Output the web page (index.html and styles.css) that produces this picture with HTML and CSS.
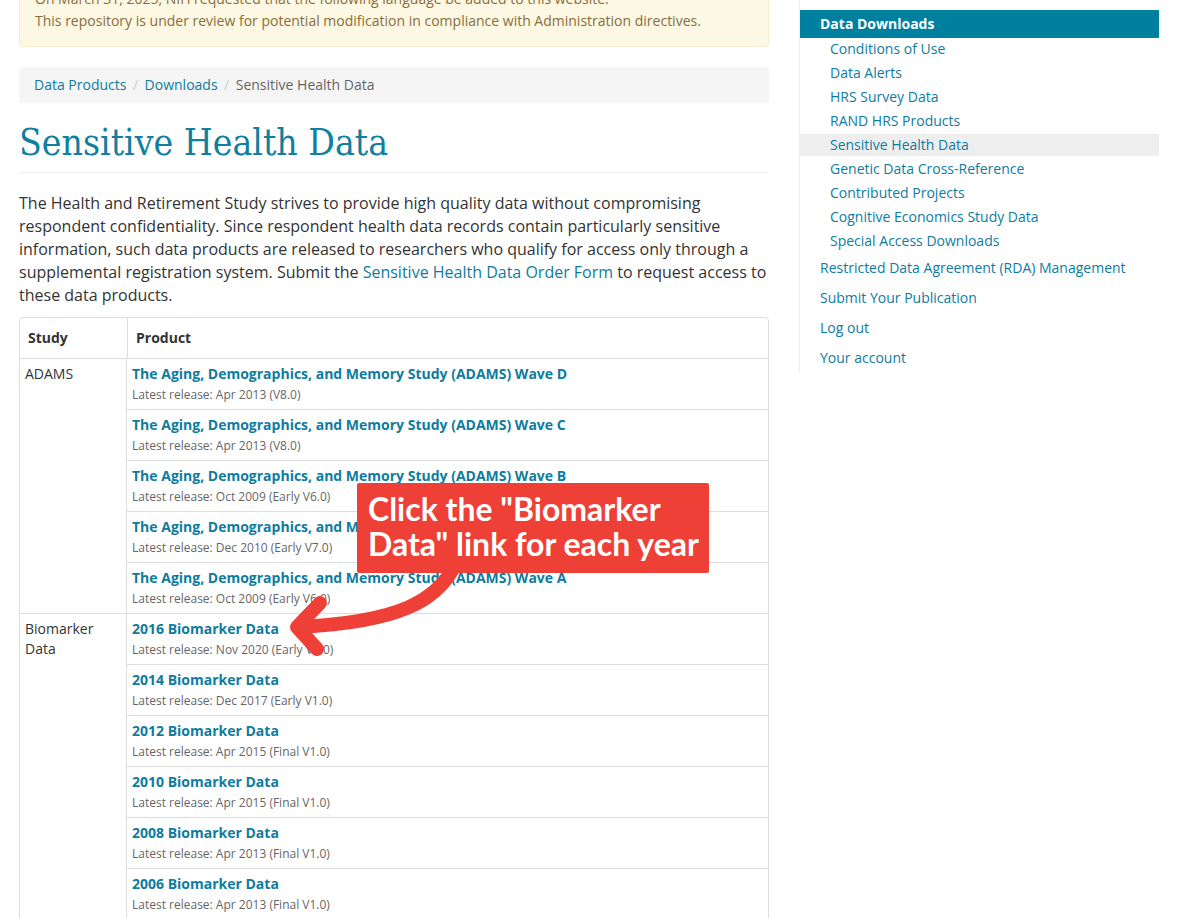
FILE: index.html
```html
<!DOCTYPE html>
<html lang="en">
<head>
<meta charset="utf-8">
<title>Sensitive Health Data</title>
<link rel="stylesheet" href="styles.css">
</head>
<body>
<div class="page">
  <main class="main">
    <div class="alert">
      <p class="alert-line1">On March 31, 2025, NIH requested that the following language be added to this website:</p>
      <p>This repository is under review for potential modification in compliance with Administration directives.</p>
    </div>
    <ol class="breadcrumb">
      <li><a href="#">Data Products</a></li>
      <li class="sep">/</li>
      <li><a href="#">Downloads</a></li>
      <li class="sep">/</li>
      <li class="current">Sensitive Health Data</li>
    </ol>
    <h1 class="title">Sensitive Health Data</h1>
    <p class="intro">The Health and Retirement Study strives to provide high quality data without compromising respondent confidentiality. Since respondent health data records contain particularly sensitive information, such data products are released to researchers who qualify for access only through a supplemental registration system. Submit the <a href="#">Sensitive Health Data Order Form</a> to request access to these data products.</p>
    <div class="table-wrap">
      <div class="callout">Click the "Biomarker<br>Data" link for each year</div>
      <svg class="arrow" width="200" height="110" viewBox="0 0 200 110">
        <path d="M178 6 C160 42 122 63 22 68" fill="none" stroke="#ee4037" stroke-width="14" stroke-linecap="round"/>
        <path d="M43 44 L20 68 L40 90" fill="none" stroke="#ee4037" stroke-width="14" stroke-linecap="round" stroke-linejoin="round"/>
      </svg>
      <table class="products">
        <thead>
          <tr><th class="col-study">Study</th><th>Product</th></tr>
        </thead>
        <tbody>
          <tr><td class="study" rowspan="5">ADAMS</td><td><a href="#" class="prod">The Aging, Demographics, and Memory Study (ADAMS) Wave D</a><div class="rel">Latest release: Apr 2013 (V8.0)</div></td></tr>
          <tr><td><a href="#" class="prod">The Aging, Demographics, and Memory Study (ADAMS) Wave C</a><div class="rel">Latest release: Apr 2013 (V8.0)</div></td></tr>
          <tr><td><a href="#" class="prod">The Aging, Demographics, and Memory Study (ADAMS) Wave B</a><div class="rel">Latest release: Oct 2009 (Early V6.0)</div></td></tr>
          <tr><td><a href="#" class="prod">The Aging, Demographics, and Memory Study (ADAMS) Wave A</a><div class="rel">Latest release: Dec 2010 (Early V7.0)</div></td></tr>
          <tr><td><a href="#" class="prod">The Aging, Demographics, and Memory Study (ADAMS) Wave A</a><div class="rel">Latest release: Oct 2009 (Early V6.0)</div></td></tr>
          <tr><td class="study" rowspan="7">Biomarker<br>Data</td><td><a href="#" class="prod">2016 Biomarker Data</a><div class="rel">Latest release: Nov 2020 (Early V1.0)</div></td></tr>
          <tr><td><a href="#" class="prod">2014 Biomarker Data</a><div class="rel">Latest release: Dec 2017 (Early V1.0)</div></td></tr>
          <tr><td><a href="#" class="prod">2012 Biomarker Data</a><div class="rel">Latest release: Apr 2015 (Final V1.0)</div></td></tr>
          <tr><td><a href="#" class="prod">2010 Biomarker Data</a><div class="rel">Latest release: Apr 2015 (Final V1.0)</div></td></tr>
          <tr><td><a href="#" class="prod">2008 Biomarker Data</a><div class="rel">Latest release: Apr 2013 (Final V1.0)</div></td></tr>
          <tr><td><a href="#" class="prod">2006 Biomarker Data</a><div class="rel">Latest release: Apr 2013 (Final V1.0)</div></td></tr>
          <tr><td><a href="#" class="prod">2004 Biomarker Data</a><div class="rel">Latest release: Apr 2013 (Final V1.0)</div></td></tr>
        </tbody>
      </table>
    </div>
  </main>
  <aside class="sidebar">
    <ul class="nav">
      <li class="nav-head"><a href="#">Data Downloads</a>
        <ul class="subnav">
          <li><a href="#">Conditions of Use</a></li>
          <li><a href="#">Data Alerts</a></li>
          <li><a href="#">HRS Survey Data</a></li>
          <li><a href="#">RAND HRS Products</a></li>
          <li class="active"><a href="#">Sensitive Health Data</a></li>
          <li><a href="#">Genetic Data Cross-Reference</a></li>
          <li><a href="#">Contributed Projects</a></li>
          <li><a href="#">Cognitive Economics Study Data</a></li>
          <li><a href="#">Special Access Downloads</a></li>
        </ul>
      </li>
      <li class="nav-item"><a href="#">Restricted Data Agreement (RDA) Management</a></li>
      <li class="nav-item"><a href="#">Submit Your Publication</a></li>
      <li class="nav-item"><a href="#">Log out</a></li>
      <li class="nav-item"><a href="#">Your account</a></li>
    </ul>
  </aside>
</div>
</body>
</html>
```
FILE: styles.css
```css
* { box-sizing: border-box; }
html, body { margin: 0; padding: 0; background: #fff; }
body {
  font-family: "Open Sans", "Noto Sans", sans-serif;
  font-size: 14px;
  line-height: 20px;
  color: #333;
  overflow: hidden;
}
a { color: #0e7c9e; text-decoration: none; }

.page {
  display: flex;
  align-items: flex-start;
  gap: 30px;
  padding-left: 19px;
  margin-top: -27px;
}
.main { width: 750px; flex: none; }

.alert {
  background: #fcf8e3;
  border: 1px solid #faebcc;
  border-radius: 4px;
  color: #8a6d3b;
  padding: 15px;
  margin-bottom: 20px;
}
.alert p { margin: 0; }
.alert .alert-line1 { margin-bottom: 2px; }

.breadcrumb {
  list-style: none;
  margin: 0 0 19px;
  padding: 8px 15px;
  background: #f5f5f5;
  border-radius: 4px;
  display: flex;
  gap: 6.5px;
}
.breadcrumb .sep { color: #ccc; }
.breadcrumb .current { color: #666; }

.title {
  font-family: "DejaVu Serif Condensed", "DejaVu Serif", serif;
  font-weight: normal;
  font-size: 37px;
  line-height: 42px;
  color: #117f9f;
  margin: 0 0 19px;
  padding-bottom: 8px;
  border-bottom: 1px solid #eee;
}

.intro {
  font-size: 16px;
  line-height: 23px;
  margin: 0 0 10px;
}

.table-wrap { position: relative; }
.products {
  width: 100%;
  border-collapse: separate;
  border-spacing: 0;
  border: 1px solid #ddd;
  border-radius: 4px;
}
.products th {
  text-align: left;
  font-weight: bold;
  padding: 10px 8px;
  border-bottom: 1px solid #ddd;
}
.products th + th { border-left: 1px solid #ddd; }
.products .col-study { width: 107px; }
.products td {
  vertical-align: top;
  padding: 5px 5px 5px;
  border-top: 1px solid #ddd;
}
.products tbody tr:first-child td { border-top: none; }
.products td.study { border-right: 1px solid #ddd; }
.prod { font-weight: bold; display: block; }
.rel { font-size: 12px; line-height: 18px; color: #666; margin-top: 2px; }

.callout {
  position: absolute;
  left: 338px;
  top: 166px;
  width: 352px;
  height: 90px;
  background: #ee4037;
  color: #fff;
  font-family: "Lato", "Noto Sans", sans-serif;
  font-weight: bold;
  font-size: 32px;
  line-height: 35px;
  padding: 8px 0 8px 11px;
  white-space: nowrap;
  border-radius: 2px;
  z-index: 2;
}
.arrow {
  position: absolute;
  left: 258px;
  top: 242px;
  z-index: 3;
}

.sidebar {
  width: 360px;
  flex: none;
  border-left: 1px solid #eee;
  padding-top: 37px;
}
.nav, .subnav { list-style: none; margin: 0; padding: 0; }
.nav-head > a {
  display: block;
  background: #00809f;
  color: #fff;
  font-weight: bold;
  padding: 4px 20px;
}
.subnav li a {
  display: block;
  padding: 1px 0 1px 30px;
  margin-bottom: 2px;
}
.subnav li:last-child a { margin-bottom: 1px; }
.subnav li.active a { background: #eee; }
.nav-item a { display: block; padding: 5px 20px; }
```
